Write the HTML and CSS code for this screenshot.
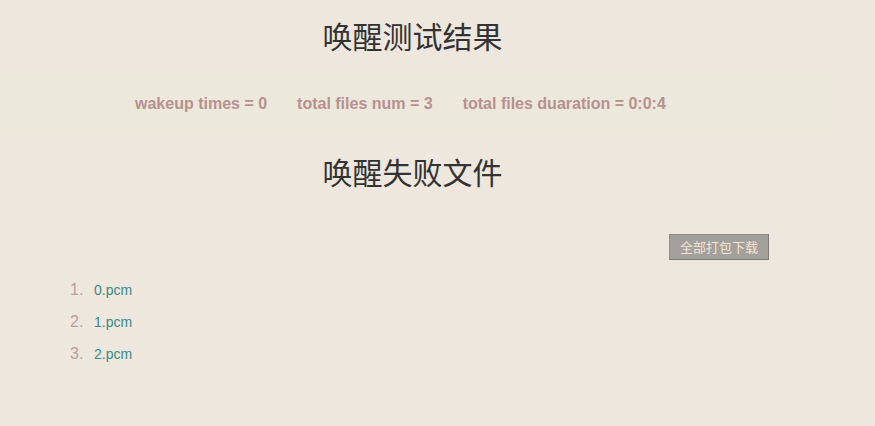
FILE: index.html
```html
<!DOCTYPE html>
<html>
<head>
<meta charset="utf-8">
<link rel="stylesheet" href="styles.css">
</head>
<body>
<div class="page">
  <h1 class="title">唤醒测试结果</h1>
  <div class="stats">
    <span class="stat">wakeup times = 0</span>
    <span class="stat">total files num = 3</span>
    <span class="stat">total files duaration = 0:0:4</span>
  </div>
  <h1 class="title title2">唤醒失败文件</h1>
  <div class="actions">
    <button class="btn">全部打包下载</button>
  </div>
  <ol class="files">
    <li><a class="file">0.pcm</a></li>
    <li><a class="file">1.pcm</a></li>
    <li><a class="file">2.pcm</a></li>
  </ol>
</div>
</body>
</html>
```
FILE: styles.css
```css
html, body {
  margin: 0;
  padding: 0;
  background: #eee7de;
}
.page {
  width: 832px;
  font-family: "Liberation Sans", Arial, "Noto Sans CJK SC", sans-serif;
}
.title {
  margin: 0;
  padding: 17px 7px 0 0;
  height: 70px;
  box-sizing: border-box;
  text-align: center;
  font-weight: normal;
  font-size: 30px;
  line-height: 36px;
  color: #333;
  font-family: "Noto Sans CJK SC", sans-serif;
}
.title2 {
  padding-top: 20px;
  height: 60px;
}
.stats {
  height: 63px;
  box-sizing: border-box;
  padding-top: 4px;
  background: #ece8dc;
  display: flex;
  align-items: center;
  padding-left: 135px;
  gap: 30px;
  font-weight: bold;
  font-size: 16px;
  color: #b89090;
}
.actions {
  display: flex;
  justify-content: flex-end;
  padding-top: 41px;
  padding-right: 63px;
}
.btn {
  width: 100px;
  height: 26px;
  background: #a39f9b;
  border: 1px solid #8f8b88;
  border-right-color: #7e7a77;
  border-bottom-color: #7e7a77;
  color: #f0e4d4;
  font-size: 13px;
  font-family: "Noto Sans CJK SC", sans-serif;
  padding: 0;
  line-height: 24px;
}
.files {
  margin: 14px 0 0 0;
  padding-left: 70px;
  list-style: none;
  counter-reset: item;
  color: #b5a29c;
}
.files li {
  height: 32px;
  line-height: 32px;
  display: flex;
  align-items: baseline;
  counter-increment: item;
}
.files li::before {
  content: counter(item) ".";
  width: 24px;
  font-size: 16px;
}
.file {
  font-size: 14px;
  color: #3a8a84;
}
```
